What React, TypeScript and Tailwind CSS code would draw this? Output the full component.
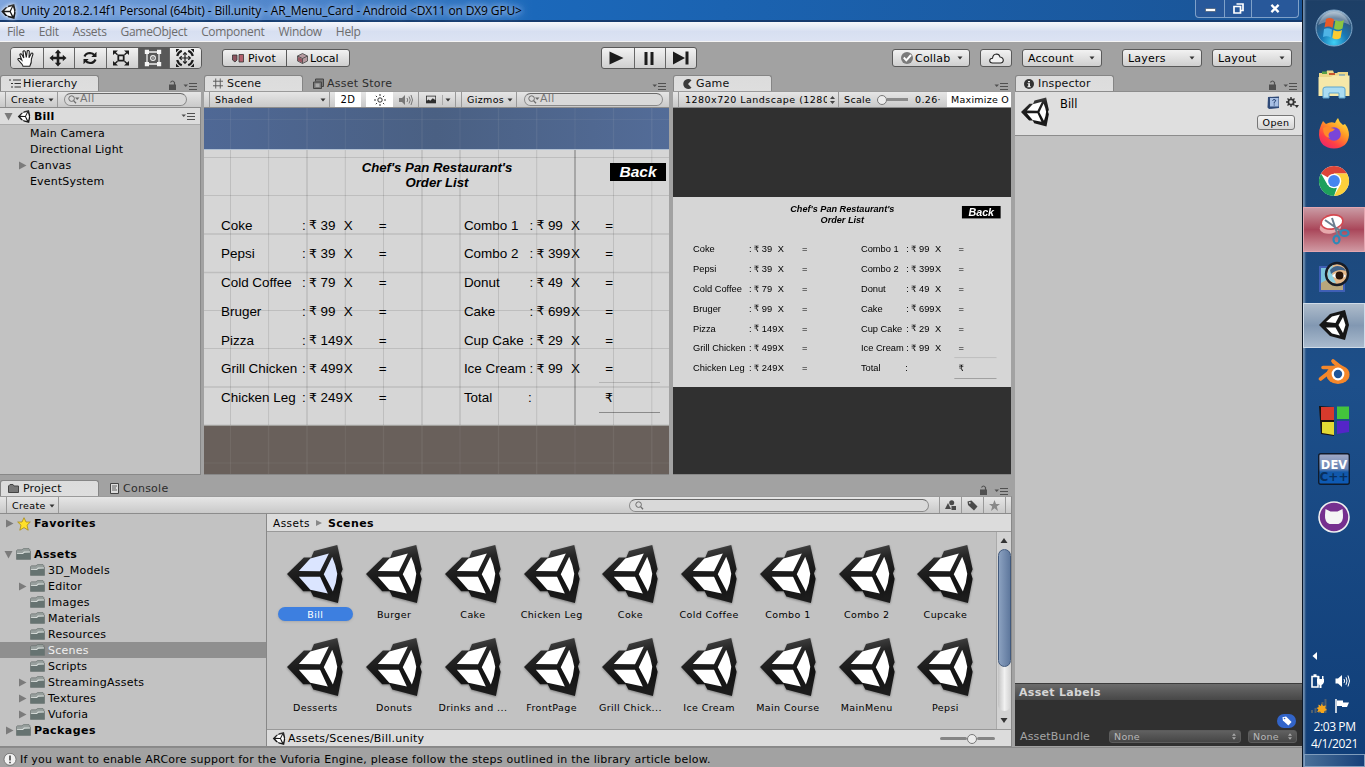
import React from "react";

const UI = "font-['DejaVu_Sans','Noto_Sans',sans-serif]";

function UnityIcon({ className = "", face = "#ffffff" }: { className?: string; face?: string }) {
  return (
    <svg viewBox="80 225 166 172" className={className}>
      <defs>
        <linearGradient id="unityBody" x1="0.2" y1="0" x2="0.4" y2="1">
          <stop offset="0" stopColor="#505050" />
          <stop offset="0.3" stopColor="#262626" />
          <stop offset="0.7" stopColor="#121212" />
          <stop offset="1" stopColor="#1c1c1c" />
        </linearGradient>
      </defs>
      <path fill="url(#unityBody)" d="M80 311L130 262L152 262L160 243L229 225L245 297L240 309L245 325L231 397L158 378L150 362L128 362Z" />
      <path fill={face} d="M115 302L149 265L204 250L178 303ZM115 319L178 319L201 369L149 358ZM214 260Q225 285 229 310Q227 337 216 363L189 312Z" />
    </svg>
  );
}

function Tri({ dir, className = "" }: { dir: "right" | "down"; className?: string }) {
  return (
    <svg viewBox="0 0 9 9" className={`h-[9px] w-[9px] shrink-0 fill-[#7b7b7b] ${className}`}>
      {dir === "right" ? <path d="M1 0.5L8.5 4.5L1 8.5Z" /> : <path d="M0.5 1H8.5L4.5 8.5Z" />}
    </svg>
  );
}

function Caret({ className = "" }: { className?: string }) {
  return (
    <svg viewBox="0 0 6 4" className={`h-[4px] w-[6px] shrink-0 fill-[#333] ${className}`}>
      <path d="M0.5 0.5H5.5L3 3.5Z" />
    </svg>
  );
}

function PaneMenu({ lock = false }: { lock?: boolean }) {
  return (
    <div className="flex items-end gap-[6px] pb-[1px]">
      {lock && (
        <svg viewBox="0 0 9 10" className="h-[10px] w-[9px]">
          <path d="M1 4.5H8V10H1Z" fill="#4f4f4f" />
          <path d="M2.5 2.5Q4.5 -0.5 6.5 2.5V5" fill="none" stroke="#4f4f4f" strokeWidth="1.2" />
        </svg>
      )}
      <svg viewBox="0 0 14 7" className="h-[7px] w-[14px]">
        <path d="M0.5 1.5H5L2.7 4Z" fill="#505050" />
        <path d="M6 0.5H14M6 3.5H14M6 6.5H14" stroke="#505050" strokeWidth="1" />
      </svg>
    </div>
  );
}

function Tab({ icon, label, className = "" }: { icon: React.ReactNode; label: string; className?: string }) {
  return (
    <div className={`flex h-full items-center rounded-t-[3px] border border-b-0 border-[#858585] bg-linear-to-b from-[#dcdcdc] to-[#dedede] text-[11px] tracking-[0.15px] text-[#101010] ${className}`}>
      {icon}
      <span className="leading-none">{label}</span>
    </div>
  );
}

function Folder({ className = "" }: { className?: string }) {
  return (
    <svg viewBox="0 0 15 12" className={`h-[12px] w-[15px] shrink-0 ${className}`}>
      <path d="M0.5 11.4V2.6L1.5 1.8H6L7.5 0.6H13L13.8 1.5V3.2H14.5V11.4Z" fill="#98a09e" stroke="#5f6867" strokeWidth="0.6" />
      <path d="M1 5.2L6.5 4.9L8 3.4H14V4.4L8.5 4.9L7 6.1H1Z" fill="#d8dddb" />
      <path d="M0.6 6H7L8.5 4.8H14.4V11.3H0.6Z" fill="#667371" />
    </svg>
  );
}

function SearchBox({ className = "", text = "", arrow = true }: { className?: string; text?: string; arrow?: boolean }) {
  return (
    <div className={`flex h-[13px] items-center rounded-full border border-[#8a8a8a] border-t-[#6a6a6a] bg-[#d9d9d9] pl-[3px] text-[11px] leading-none text-[#757575] ${className}`}>
      <svg viewBox="0 0 12 9" className="h-[9px] w-[12px]">
        <circle cx="3.6" cy="3.6" r="2.8" fill="none" stroke="#6d6d6d" strokeWidth="1" />
        <path d="M5.6 5.6L8 8.3" stroke="#6d6d6d" strokeWidth="1.3" />
        {arrow && <path d="M7 2.5H11.5L9.2 5Z" fill="#6d6d6d" />}
      </svg>
      <span className="-mt-[2px]">{text}</span>
    </div>
  );
}

const BAR = "flex h-[17px] items-center border-y border-t-[#9a9a9a] border-b-[#8c8c8c] bg-linear-to-b from-[#e6e6e6] to-[#c9c9c9] text-[9.5px] leading-none tracking-[0.35px] text-black";

/* ---------- Order list page ---------- */

type Item = [string, string];
const LEFT: Item[] = [["Coke", "39"], ["Pepsi", "39"], ["Cold Coffee", "79"], ["Bruger", "99"], ["Pizza", "149"], ["Grill Chicken", "499"], ["Chicken Leg", "249"]];
const RIGHT: Item[] = [["Combo 1", "99"], ["Combo 2", "399"], ["Donut", "49"], ["Cake", "699"], ["Cup Cake", "29"], ["Ice Cream", "99"]];
const ROW = "grid h-[28.75px] grid-cols-[81px_7px_11.5px_23.2px_35px_20px] items-center whitespace-nowrap";

function PriceRow({ item }: { item: Item }) {
  return (
    <div className={ROW}>
      <span>{item[0]}</span>
      <span>:</span>
      <span className="text-[12.4px]">₹</span>
      <span>{item[1]}</span>
      <span>X</span>
      <span>=</span>
    </div>
  );
}

function OrderList() {
  return (
    <div className="flex h-[275px] w-[489px] flex-col bg-[#d6d6d6] font-['Liberation_Sans','DejaVu_Sans',sans-serif] text-[13.45px] leading-none text-black">
      <div className="flex h-[61px] pt-[10px] pl-[142px]">
        <div className="w-[206px] text-center text-[13.2px] leading-[15.4px] font-bold italic">
          Chef's Pan Restaurant's
          <br />
          Order List
        </div>
        <div className="ml-[70px] mt-[3px] flex h-[18px] w-[56px] items-center justify-center bg-black text-[15.5px] font-bold text-white italic">Back</div>
      </div>
      <div className="flex gap-[65.2px] pl-[29px]">
        <div>
          {LEFT.map((i) => (
            <PriceRow key={i[0]} item={i} />
          ))}
        </div>
        <div>
          {RIGHT.map((i) => (
            <div key={i[0]} className="[&>div]:grid-cols-[65.5px_7px_11.5px_23px_34.3px_20px]">
              <PriceRow item={i} />
            </div>
          ))}
          <div className="flex h-[28.75px] items-center">
            <span className="w-[64px]">Total</span>
            <span className="w-[71px]">:</span>
            <span className="flex h-[31px] w-[61px] items-center border-y border-t-[#b4b4b4] border-b-[#8a8a8a] pl-[6px] text-[12.4px]">₹</span>
          </div>
        </div>
      </div>
    </div>
  );
}

const VLINES = [26.5, 64.6, 103, 141.3, 179.5, 218, 256, 294.5, 332.7, 371, 409.5, 447.8];
const HLINES = [11.5, 49.5, 87.5, 126, 164.5, 202.5, 240.5, 279, 317, 355];

function ScenePane() {
  return (
    <div className="flex w-[465px] flex-col">
      <div className="flex h-[16px] pl-0">
        <Tab className="w-[99px] pl-[8px]" label="Scene" icon={<svg viewBox="0 0 11 11" className="mr-[4px] h-[11px] w-[10px]"><path d="M3 0V11M8 0V11M0 3H11M0 8H11" stroke="#555" /></svg>} />
        <div className="flex flex-1 items-center pt-[1px] pl-[10px] text-[11px] leading-none tracking-[0.25px] text-[#2c2c2c]">
          <svg viewBox="0 0 11 11" className="mr-[3px] h-[11px] w-[11px]">
            <path d="M0.5 4H8.5V10.5H0.5ZM2.5 3.5V1H10.5V8.5H9" fill="#777" stroke="#444" />
            <path d="M2.5 5.5H6.5V9H2.5Z" fill="#aaa" />
          </svg>
          Asset Store
        </div>
        <div className="flex items-end pr-[3px]"><PaneMenu /></div>
      </div>
      <div className={BAR}>
        <div className="ml-[5px] flex h-full w-[121px] items-center justify-between border-x border-[#999] pr-[3px] pl-[5px]">Shaded<Caret /></div>
        <div className="ml-[5px] flex h-full w-[26px] items-center justify-center bg-white text-[10px]">2D</div>
        <div className="ml-[5px] flex h-full w-[27px] items-center justify-center bg-white">
          <svg viewBox="0 0 12 12" className="h-[12px] w-[12px]">
            <circle cx="6" cy="6" r="2.2" fill="none" stroke="#333" />
            <path d="M6 0V2M6 10V12M0 6H2M10 6H12M1.8 1.8L3 3M9 9L10.2 10.2M10.2 1.8L9 3M3 9L1.8 10.2" stroke="#333" />
          </svg>
        </div>
        <div className="flex h-full w-[26px] items-center justify-center border-r border-[#999]">
          <svg viewBox="0 0 14 12" className="h-[12px] w-[14px]">
            <path d="M0 4H3L6 1V11L3 8H0Z" fill="#777" />
            <path d="M8 4Q9.5 6 8 8M10 2.5Q12.5 6 10 9.5M12 1Q15 6 12 11" fill="none" stroke="#777" />
          </svg>
        </div>
        <div className="flex h-full w-[37px] items-center border-r border-[#999] pr-[4px] pl-[7px]">
          <svg viewBox="0 0 12 9" className="h-[9px] w-[12px]">
            <path d="M0 0H12V9H0Z" fill="#2e2e2e" />
            <path d="M1 1H11V5L8 3L5 6L3 4.5L1 6Z" fill="#dcdcdc" />
          </svg>
          <div className="ml-[6px] h-[10px] w-[1px] bg-[#aaa]" />
          <Caret className="ml-[2px]" />
        </div>
        <div className="ml-[5px] flex h-full w-[56px] items-center justify-between border-x border-[#999] pr-[3px] pl-[5px]">Gizmos<Caret /></div>
        <SearchBox className="ml-[7px] w-[139px]" text="All" />
      </div>
      <div className="relative h-[367px] overflow-hidden border-b border-[#888] bg-[#69605b]">
        <div className="h-[41px] bg-linear-to-r from-[#4f6895] via-[#4a6083] to-[#536c98]" />
        <div className="h-[1px] bg-[#b0bfd2]" />
        <div className="-ml-[12px] h-[275px] w-[489px]"><OrderList /></div>
        <div className="h-[1px] bg-[#aaa9a4]" />
        <svg className="absolute inset-0 h-[367px] w-[465px]">
          {VLINES.map((x, i) => (
            <path key={`o${x}`} d={`M${x} 0V42M${x} 318V367`} stroke="#d0d0d0" strokeOpacity="0.09" strokeWidth={i % 3 === 0 ? 1 : 1.4} />
          ))}
          {VLINES.map((x) => (
            <path key={x} d={`M${x} 42V317`} stroke="#000" strokeOpacity={x === 371 ? 0.28 : 0.11} strokeWidth={x === 371 || x === 218 || x === 256 || x === 103 ? 1.6 : 1} />
          ))}
          {HLINES.map((y) => (
            <path key={y} d={`M0 ${y}H465`} stroke={y < 43 || y > 317 ? "#ccc" : "#000"} strokeOpacity={y < 43 || y > 317 ? 0.08 : 0.11} strokeWidth={y === 126 || y === 164.5 || y === 279 ? 1.6 : 1} />
          ))}
        </svg>
      </div>
    </div>
  );
}

function GamePane() {
  return (
    <div className="flex w-[338px] flex-col">
      <div className="flex h-[16px] justify-between">
        <Tab className="w-[99px] pl-[9px]" label="Game" icon={<svg viewBox="0 0 10 10" className="mr-[3px] h-[10px] w-[10px]"><path d="M5 5L8.5 1.2A5 5 0 1 0 8.5 8.8Z" fill="#3a3a3a" /></svg>} />
        <div className="flex items-end pr-[3px]"><PaneMenu /></div>
      </div>
      <div className={`${BAR} overflow-hidden whitespace-nowrap`}>
        <div className="ml-[5px] flex h-full w-[161px] items-center justify-between border-x border-[#999] pr-[3px] pl-[6px]">
          <span className="w-[142px] overflow-hidden py-[1px] tracking-[0.48px]">1280x720 Landscape (1280</span>
          <svg viewBox="0 0 5 8" className="h-[8px] w-[5px] fill-[#444]"><path d="M0 3L2.5 0L5 3ZM0 5H5L2.5 8Z" /></svg>
        </div>
        <span className="ml-[5px] w-[33px]">Scale</span>
        <div className="flex w-[31px] items-center">
          <div className="h-[10px] w-[10px] shrink-0 rounded-full border border-[#777] bg-[#ececec]" />
          <div className="h-[3px] flex-1 bg-[#8b8b8b]" />
        </div>
        <span className="ml-[7px] w-[27px] text-[9.5px]">0.26·</span>
        <div className="ml-[5px] flex h-full flex-1 items-center bg-white pl-[4px] tracking-[0.25px]">Maximize O</div>
      </div>
      <div className="h-[367px] overflow-hidden border-b border-[#888] bg-[#303030] pt-[89px]">
        <div className="h-[190px] overflow-hidden"><div className="origin-top-left scale-[0.6912]"><OrderList /></div></div>
      </div>
    </div>
  );
}

function HierarchyPane() {
  return (
    <div className="flex w-[201px] flex-col">
      <div className="flex h-[16px] justify-between">
        <Tab className="w-[99px] pl-[8px]" label="Hierarchy" icon={<svg viewBox="0 0 12 9" className="mr-[2px] h-[9px] w-[12px]"><path d="M0 1H2M4 1H12M2 4.5H4M5.5 4.5H12M2 8H4M5.5 8H12" stroke="#333" /></svg>} />
        <div className="flex items-end pr-[4px]"><PaneMenu lock /></div>
      </div>
      <div className={BAR}>
        <div className="ml-[5px] flex h-full w-[53px] items-center justify-between border-x border-[#999] pr-[3px] pl-[5px]">Create<Caret /></div>
        <SearchBox className="ml-[6px] w-[123px]" text="All" />
      </div>
      <div className="h-[367px] border-r border-b border-[#888] bg-[#c2c2c2] text-[11px] tracking-[0.17px]">
        <div className="flex h-[17px] items-center border-b border-[#ababab] bg-[#dcdcdc] pt-[1px] pl-[4px] leading-none">
          <Tri dir="down" />
          <UnityIcon className="ml-[4px] h-[13px] w-[14px]" />
          <b className="ml-[3px] flex-1">Bill</b>
          <div className="pr-[5px]"><PaneMenu /></div>
        </div>
        {["Main Camera", "Directional Light", "Canvas", "EventSystem"].map((t) => (
          <div key={t} className="flex h-[16px] items-center pl-[18px]">
            <span className="w-[12px]">{t === "Canvas" && <Tri dir="right" />}</span>
            <span className="leading-none">{t}</span>
          </div>
        ))}
      </div>
    </div>
  );
}

const TREE: { n: string; a?: boolean }[] = [
  { n: "3D_Models" }, { n: "Editor", a: true }, { n: "Images" }, { n: "Materials" }, { n: "Resources" },
  { n: "Scenes" }, { n: "Scripts" }, { n: "StreamingAssets", a: true }, { n: "Textures", a: true }, { n: "Vuforia", a: true },
];
const FILES = ["Bill", "Burger", "Cake", "Chicken Leg", "Coke", "Cold Coffee", "Combo 1", "Combo 2", "Cupcake", "Desserts", "Donuts", "Drinks and ...", "FrontPage", "Grill Chick...", "Ice Cream", "Main Course", "MainMenu", "Pepsi"];

function ProjectPane() {
  return (
    <div className="mt-[5px] flex w-[1012px] flex-col">
      <div className="flex h-[16px] justify-between">
        <div className="flex">
          <Tab className="w-[99px] pl-[7px]" label="Project" icon={<svg viewBox="0 0 11 9" className="mr-[4px] h-[9px] w-[11px]"><path d="M0.5 8.5V2L2 0.5H5L6 2H10.5V8.5Z" fill="#777" stroke="#444" /></svg>} />
          <div className="flex items-center pl-[11px] text-[11px] leading-none tracking-[0.25px] text-[#2c2c2c]">
            <svg viewBox="0 0 9 11" className="mr-[4px] h-[11px] w-[9px]"><path d="M0.5 0.5H8.5V10.5H0.5Z" fill="#ddd" stroke="#444" /><path d="M2 3H7M2 5H6M2 7H7" stroke="#444" strokeWidth="0.8" /></svg>
            Console
          </div>
        </div>
        <div className="flex items-end pr-[4px]"><PaneMenu lock /></div>
      </div>
      <div className={`${BAR} h-[18px] border-r border-r-[#888]`}>
        <div className="ml-[6px] flex h-full w-[53px] items-center justify-between border-x border-[#999] pt-[1px] pr-[3px] pl-[5px]">Create<Caret /></div>
        <SearchBox className="ml-[570px] w-[300px] pl-[5px]" arrow={false} />
        <div className="ml-[10px] flex h-full">
          <div className="flex w-[22px] items-center justify-center border-l border-[#999]">
            <svg viewBox="0 0 11 10" className="h-[10px] w-[11px] fill-[#4a4a4a]"><path d="M0 9L3 3L6 9Z" /><circle cx="6.7" cy="2.7" r="2.5" /><path d="M6.5 6H11V10H6.5Z" /></svg>
          </div>
          <div className="flex w-[22px] items-center justify-center border-l border-[#999]">
            <svg viewBox="0 0 11 11" className="h-[11px] w-[11px]"><path d="M0.5 1.5L4.5 0.5L10.5 6.5L7 10.5L1 5Z" fill="#4a4a4a" /><circle cx="2.8" cy="2.8" r="0.9" fill="#ddd" /></svg>
          </div>
          <div className="flex w-[23px] items-center justify-center border-x border-[#999]">
            <svg viewBox="0 0 11 11" className="h-[11px] w-[11px] fill-[#888]"><path d="M5.5 0L7 4H11L7.8 6.5L9 11L5.5 8.3L2 11L3.2 6.5L0 4H4Z" /></svg>
          </div>
        </div>
      </div>
      <div className="flex h-[233px] border-b border-[#888]">
        <div className="w-[267px] border-r border-[#888] bg-[#c2c2c2] pt-[1px] text-[11px] leading-none tracking-[0.17px]">
          <div className="flex h-[17px] items-center pl-[5px]">
            <Tri dir="right" />
            <svg viewBox="0 0 14 14" className="ml-[3px] h-[14px] w-[14px]"><path d="M7 0.7L9 5H13.3L10 8.2L11.2 13.2L7 10.6L2.8 13.2L4 8.2L0.7 5H5Z" fill="#ffe028" stroke="#a88a18" strokeWidth="0.8" /></svg>
            <b className="ml-[3px] tracking-[0.5px]">Favorites</b>
          </div>
          <div className="mt-[14px] flex h-[16px] items-center pl-[4px]">
            <Tri dir="down" /><Folder className="ml-[3px]" />
            <b className="ml-[3px] tracking-[0.4px]">Assets</b>
          </div>
          {TREE.map((t) => (
            <div key={t.n} className={`flex h-[16px] items-center pl-[18px] ${t.n === "Scenes" ? "bg-[#8f8f8f] text-[#f0f0f0]" : "text-black"}`}>
              <span className="w-[12px]">{t.a && <Tri dir="right" />}</span>
              <Folder />
              <span className="ml-[3px] tracking-[0.24px]">{t.n}</span>
            </div>
          ))}
          <div className="flex h-[16px] items-center pl-[5px]">
            <Tri dir="right" /><Folder className="ml-[2px]" />
            <b className="ml-[3px] tracking-[0.45px]">Packages</b>
          </div>
        </div>
        <div className="flex w-[745px] flex-col border-r border-[#888]">
          <div className="flex h-[18px] items-center border-b border-[#999] bg-[#dcdcdc] pt-[1px] pl-[6px] text-[10.5px] leading-none tracking-[0.45px]">
            Assets
            <svg viewBox="0 0 6 6" className="mx-[6px] h-[6px] w-[6px] fill-[#888]"><path d="M0 0L6 3L0 6Z" /></svg>
            <b className="text-[11px] tracking-[0.4px]">Scenes</b>
          </div>
          <div className="flex h-[197px] bg-[#c2c2c2]">
            <div className="grid w-[729px] grid-cols-[repeat(9,78.75px)] grid-rows-[93px_93px] pt-[13px] pl-[9px]">
              {FILES.map((f, i) => (
                <div key={f} className="flex flex-col items-center">
                  <UnityIcon className="h-[58px] w-[56px] drop-shadow-[0_1px_1px_rgba(0,0,0,0.35)]" face={i === 0 ? "#dbe5ff" : "#ffffff"} />
                  <div className={`mt-[4px] flex h-[14px] w-[75px] items-center justify-center rounded-full pt-[1px] text-[9.5px] leading-none tracking-[0.4px] whitespace-nowrap ${i === 0 ? "bg-[#3d7fe0] text-white shadow-sm" : "text-black"}`}>{f}</div>
                </div>
              ))}
            </div>
            <div className="flex w-[15px] flex-col items-center border-l border-[#aaa] bg-[#d2d2d2]">
              <div className="flex h-[17px] items-center"><svg viewBox="0 0 8 5" className="h-[5px] w-[8px] fill-[#333]"><path d="M0.5 5L4 0L7.5 5Z" /></svg></div>
              <div className="h-[162px] w-[13px] rounded-full bg-linear-to-r from-[#c2c2c2] via-[#f1f1f1] to-[#d0d0d0]">
                <div className="h-[118px] rounded-full border border-[#41597c] bg-linear-to-r from-[#8ba1c0] to-[#5f789d]" />
              </div>
              <div className="flex h-[18px] items-center"><svg viewBox="0 0 8 5" className="h-[5px] w-[8px] fill-[#333]"><path d="M0.5 0L4 5L7.5 0Z" /></svg></div>
            </div>
          </div>
          <div className="flex h-[17px] items-center border-t border-[#999] bg-[#dcdcdc] pt-[1px] pl-[5px] text-[11px] leading-none tracking-[0.24px]">
            <UnityIcon className="mr-[2px] h-[13px] w-[14px]" />
            <span className="flex-1">Assets/Scenes/Bill.unity</span>
            <div className="mr-[16px] flex w-[55px] items-center">
              <div className="h-[3px] w-[27px] rounded bg-[#858585]" />
              <div className="h-[10px] w-[10px] shrink-0 rounded-full border border-[#777] bg-[#ececec]" />
              <div className="h-[3px] flex-1 rounded bg-[#858585]" />
            </div>
          </div>
        </div>
      </div>
    </div>
  );
}

function InspectorPane() {
  return (
    <div className="flex w-[287px] flex-col">
      <div className="flex h-[16px] justify-between">
        <Tab
          className="w-[99px] pl-[8px]"
          label="Inspector"
          icon={<svg viewBox="0 0 10 10" className="mr-[4px] h-[10px] w-[10px]"><circle cx="5" cy="5" r="5" fill="#333" /><path d="M4 2H6V3.3H4ZM3.5 4.3H6V7.3H6.8V8.2H3.4V7.3H4.2V5.1H3.5Z" fill="#eee" /></svg>}
        />
        <div className="flex items-end pr-[5px]"><PaneMenu lock /></div>
      </div>
      <div className="flex h-[45px] justify-between border-y border-y-[#8c8c8c] bg-[#dfdfdf] pl-[6px]">
        <div className="flex pt-[5px]">
          <UnityIcon className="h-[30px] w-[28px]" />
          <span className="mt-[2px] ml-[11px] text-[11.5px] leading-none">Bill</span>
        </div>
        <div className="flex flex-col items-end pt-[4px] pr-[3px]">
          <div className="flex items-center gap-[6px]">
            <svg viewBox="0 0 13 13" className="h-[13px] w-[13px]"><path d="M1 1L12 0.5V12L2 13L0.5 11.5Z" fill="#2f4a78" /><path d="M3 2H11.5V10.5H3Z" fill="#a8c0e4" /><path d="M5.5 4.5Q7 2.5 8.7 4.3Q8.7 5.5 7.2 6.3V7.5M7.2 8.5V9.5" stroke="#1c3664" fill="none" /></svg>
            <svg viewBox="0 0 13 12" className="h-[12px] w-[13px]"><circle cx="5" cy="5" r="2.7" fill="none" stroke="#333" strokeWidth="1.8" /><path d="M5 0V10M0 5H10M1.5 1.5L3 3M7 7L8.5 8.5M8.5 1.5L7 3M3 7L1.5 8.5" stroke="#333" strokeWidth="1.4" /><circle cx="5" cy="5" r="1.7" fill="#dfdfdf" /><path d="M8.5 8H13L10.8 11Z" fill="#333" /></svg>
          </div>
          <div className="mt-[6px] mr-[4px] flex h-[15px] w-[38px] items-center justify-center rounded-[3px] border border-[#777] bg-linear-to-b from-[#f4f4f4] to-[#d5d5d5] text-[9.5px] leading-none tracking-[0.4px]">Open</div>
        </div>
      </div>
      <div className="h-[547px] bg-[#c2c2c2]" />
      <div className="flex h-[17px] items-center border-t border-[#3c3c3c] bg-linear-to-b from-[#6b6b6b] to-[#474747] pt-[1px] pl-[4px] text-[11px] leading-none font-bold tracking-[0.3px] text-[#d6d6d6]">Asset Labels</div>
      <div className="flex h-[46px] flex-col bg-[#303030]">
        <div className="flex h-[29px] items-end justify-end pr-[6px] pb-[1px]">
          <div className="flex h-[14px] w-[19px] items-center justify-center rounded-full bg-[#3264c8]">
            <svg viewBox="0 0 11 11" className="h-[10px] w-[10px]"><path d="M0.5 1.5L4.5 0.5L10.5 6.5L7 10.5L1 5Z" fill="#fff" /><circle cx="2.8" cy="2.8" r="0.9" fill="#3264c8" /></svg>
          </div>
        </div>
        <div className="flex h-[15px] items-center pl-[5px] text-[11px] leading-none tracking-[0.15px] text-[#a5a5a5]">
          <span className="w-[89px]">AssetBundle</span>
          <Select className="w-[132px]" />
          <Select className="ml-[7px] w-[49px]" />
        </div>
      </div>
    </div>
  );
}

function Select({ className }: { className: string }) {
  return (
    <div className={`flex h-[13px] items-center justify-between rounded-[3px] border border-[#5c5c5c] bg-linear-to-b from-[#606060] to-[#464646] pr-[4px] pl-[4px] text-[9.5px] tracking-[0.3px] text-[#b8b8b8] ${className}`}>
      None
      <svg viewBox="0 0 5 8" className="h-[7px] w-[4px] fill-[#aaa]"><path d="M0 3L2.5 0L5 3ZM0 5H5L2.5 8Z" /></svg>
    </div>
  );
}

const BTN = "flex items-center rounded-[3px] border border-[#595959] bg-linear-to-b from-[#f2f2f2] to-[#cfcfcf] text-[11px] leading-none tracking-[0.2px] text-black";

function Dropdown({ label, className }: { label: string; className: string }) {
  return (
    <div className={`${BTN} h-[18px] justify-between pr-[6px] pl-[5px] ${className}`}>
      {label}
      <Caret />
    </div>
  );
}

const TOOLS = [
  <path key="hand" d="M6 17.2Q5.5 15.5 3.2 13.2L0.9 10.6Q0.9 9 2.8 9.6L4.8 11.2L2.8 5.8Q3.2 4.2 4.7 5.3L6.8 9L6 2.6Q7 0.9 8.2 2.5L9.3 8.3L10.3 1.8Q11.7 0.8 12.3 2.5L12 8.8L14.3 4.2Q15.9 3.6 15.9 5.3L14.4 10Q14.8 13.5 12.8 17.2Z" fill="#fff" stroke="#222" strokeWidth="1.1" />,
  <path key="move" d="M9 0.5L12.2 4.2H10.3V7.7H13.8V5.8L17.5 9L13.8 12.2V10.3H10.3V13.8H12.2L9 17.5L5.8 13.8H7.7V10.3H4.2V12.2L0.5 9L4.2 5.8V7.7H7.7V4.2H5.8Z" fill="#1c1c1c" />,
  <g key="rot" fill="none" stroke="#1c1c1c" strokeWidth="2.2"><path d="M3.5 7.5Q5 4 9 4Q12 4.2 13.5 6.3M14.5 10.5Q13 14 9 14Q6 13.8 4.5 11.7" /><path d="M15.5 2.8V8H10.3ZM2.5 15.2V10H7.7Z" fill="#1c1c1c" stroke="none" /></g>,
  <g key="scale"><path d="M6.3 6.3H11.7V11.7H6.3Z" fill="none" stroke="#1c1c1c" strokeWidth="1.8" /><path d="M1 1.5H6L1 6ZM17 1.5V6L12 1.5ZM1 16.5V12L6 16.5ZM17 16.5H12L17 12Z" fill="#1c1c1c" /><path d="M2.5 3L5.5 5.7M15.5 3L12.5 5.7M2.5 15L5.5 12.3M15.5 15L12.5 12.3" stroke="#1c1c1c" strokeWidth="1.5" /></g>,
  <g key="rect"><path d="M3 3H15V15H3Z" fill="none" stroke="#eee" strokeWidth="1.3" /><path d="M0.8 0.8H5V5H0.8ZM13 0.8H17.2V5H13ZM0.8 13H5V17.2H0.8ZM13 13H17.2V17.2H13Z" fill="#f5f5f5" /><circle cx="9" cy="9" r="2.4" fill="none" stroke="#eee" strokeWidth="1.1" /><circle cx="9" cy="9" r="0.8" fill="#eee" /></g>,
  <g key="multi" fill="none" stroke="#1c1c1c"><path d="M9 4V14M4 9H14" strokeWidth="1.2" /><path d="M7.2 5.7L9 3.7L10.8 5.7M7.2 12.3L9 14.3L10.8 12.3M5.7 7.2L3.7 9L5.7 10.8M12.3 7.2L14.3 9L12.3 10.8" strokeWidth="1.2" /><path d="M1.2 7Q2.2 3.2 5.8 1.7M12.2 1.7Q15.8 3.2 16.8 7M16.8 11Q15.8 14.8 12.2 16.3M5.8 16.3Q2.2 14.8 1.2 11" strokeWidth="2.2" /><path d="M0 0H3.5L0 3.5ZM18 0V3.5L14.5 0ZM0 18V14.5L3.5 18ZM18 18H14.5L18 14.5Z" fill="#1c1c1c" stroke="none" /></g>,
];

function Toolbar() {
  return (
    <div className="flex h-[33px] pt-[5px] pl-[10px]">
      <div className="flex h-[22px] w-[192px] overflow-hidden rounded-[4px] border border-[#595959]">
        {TOOLS.map((t, i) => (
          <div key={i} className={`flex w-[32px] items-center justify-center pr-[2px] ${i ? "border-l border-[#666]" : ""} ${i === 4 ? "bg-[#585858]" : "bg-linear-to-b from-[#f2f2f2] to-[#cfcfcf]"}`}>
            <svg viewBox="0 0 18 18" className="h-[18px] w-[18px]">{t}</svg>
          </div>
        ))}
      </div>
      <div className={`${BTN} mt-[2px] ml-[20px] h-[18px] w-[128px]`}>
        <div className="flex h-full w-[64px] items-center border-r border-[#595959] pl-[9px]">
          <svg viewBox="0 0 12 9" className="mr-[4px] h-[9px] w-[12px]"><path d="M0.5 1H5V6L3 8L0.5 6Z" fill="#8d5560" stroke="#333" strokeWidth="0.8" /><path d="M7 0.5H11.5V8H7Z" fill="#b3606c" stroke="#333" strokeWidth="0.8" /></svg>
          Pivot
        </div>
        <svg viewBox="0 0 11 11" className="mr-[2px] ml-[10px] h-[11px] w-[11px]"><path d="M5.5 0.5L10.5 3V8L5.5 10.5L0.5 8V3Z" fill="#b59aa0" stroke="#444" strokeWidth="0.8" /><path d="M0.5 3L5.5 5.5L10.5 3M5.5 5.5V10.5" fill="none" stroke="#444" strokeWidth="0.8" /><path d="M1 4L5 6V9.6L1 7.7Z" fill="#995762" /></svg>
        <span className="tracking-[0]">Local</span>
      </div>
      <div className={`${BTN} ml-[251px] h-[22px] w-[96px]`}>
        <div className="flex h-full w-[32px] items-center justify-center pr-[4px]"><svg viewBox="0 0 14 14" className="h-[14px] w-[15px]"><path d="M0 0.5L14 7L0 13.5Z" fill="#1c1c1c" /></svg></div>
        <div className="flex h-full w-[32px] items-center justify-center border-x border-[#666] pr-[2px]"><svg viewBox="0 0 10 13" className="h-[13px] w-[10px]"><path d="M0.5 0H3.5V13H0.5ZM6.5 0H9.5V13H6.5Z" fill="#1c1c1c" /></svg></div>
        <div className="flex h-full w-[30px] items-center justify-center pr-[1px]"><svg viewBox="0 0 16 14" className="h-[14px] w-[16px]"><path d="M0 0.5L12 7L0 13.5ZM12.5 0.5H15.5V13.5H12.5Z" fill="#1c1c1c" /></svg></div>
      </div>
      <div className="mt-[2px] ml-[195px] flex">
        <div className={`${BTN} h-[18px] w-[78px] pl-[8px]`}>
          <svg viewBox="0 0 12 12" className="mr-[2px] h-[12px] w-[12px]"><circle cx="6" cy="6" r="6" fill="#7b7b7b" /><path d="M2.8 5.5L5.3 8.3L10 3" fill="none" stroke="#fff" strokeWidth="2" /></svg>
          <span className="flex-1">Collab</span>
          <Caret className="mr-[6px]" />
        </div>
        <div className={`${BTN} ml-[10px] h-[18px] w-[32px] justify-center`}>
          <svg viewBox="0 0 15 11" className="h-[11px] w-[15px]"><path d="M3.5 10Q0.7 9.8 0.7 7.5Q1 5.2 3.5 5.3Q4 1.2 7.5 1Q10.3 1 11 4Q14.3 4.5 14.3 7.5Q14 10 11.5 10Z" fill="#f2f2f2" stroke="#222" strokeWidth="1.1" /></svg>
        </div>
        <Dropdown label="Account" className="ml-[10px] w-[80px]" />
        <Dropdown label="Layers" className="ml-[20px] w-[80px]" />
        <Dropdown label="Layout" className="ml-[10px] w-[80px]" />
      </div>
    </div>
  );
}

/* ---------- Task bar ---------- */

function Slot({ children, look = "" }: { children: React.ReactNode; look?: string }) {
  return (
    <div className="flex h-[48px] items-center">
      <div className={`flex h-[45px] w-full items-center justify-center ${look}`}>
        <svg viewBox="0 0 32 32" className="h-[32px] w-[32px]">{children}</svg>
      </div>
    </div>
  );
}

function TaskBar() {
  return (
    <div className="flex w-[63px] flex-col border-l border-[#0a1626] bg-linear-to-b from-[#1d3f66] via-[#1d4f8a] to-[#103e78] font-['Open_Sans','Noto_Sans',sans-serif] shadow-[inset_3px_0_2px_-1px_#7390b0]">
      <div className="flex h-[61px] justify-center pt-[9px]">
        <svg viewBox="0 0 38 38" className="h-[38px] w-[38px]">
          <defs>
            <radialGradient id="orb" cx="0.5" cy="0.9" r="0.9"><stop offset="0" stopColor="#3fd0f5" /><stop offset="0.4" stopColor="#1877b5" /><stop offset="0.75" stopColor="#31577c" /><stop offset="1" stopColor="#b6cbdc" /></radialGradient>
          </defs>
          <circle cx="19" cy="19" r="18" fill="url(#orb)" stroke="#7fa6c8" strokeWidth="1" />
          <path d="M3 16Q8 3 19 3Q30 3 35 16Q19 8 3 16Z" fill="#fff" opacity="0.3" />
          <path d="M11 10Q15 8 19 10.5L17.5 19Q13.5 16.5 9.5 18.5Z" fill="#e85a28" />
          <path d="M20.5 11Q25 13.5 29 11L27.5 19.5Q23.5 22 19 19.5Z" fill="#8cc541" />
          <path d="M9 20Q13 18.5 17 20.5L15.8 28.5Q12 26.5 8 28Z" fill="#4fb4e6" />
          <path d="M18.5 21Q23 23.5 27 21L25.5 29Q21.5 31.5 17.3 29Z" fill="#fbcb32" />
        </svg>
      </div>
      <Slot>
        <path d="M1 4H8L9 1.5H15L16 4H19L20 3H30V27H1Z" fill="#ecd789" /><path d="M4 2.5H9V5H4Z" fill="#58a046" /><path d="M11 4H17V6H11Z" fill="#c8562e" /><path d="M21 5.5H27V8H21Z" fill="#4d8cc0" /><path d="M0.5 8H13L15 6.5H31.5V27H0.5Z" fill="#f6e8a9" /><path d="M5 29V20Q5 18 8 18H24Q27 18 27 20V29H21V24H11V29Z" fill="#aadcf2" stroke="#5ca5d0" />
      </Slot>
      <Slot>
        <defs><linearGradient id="fox" x1="0.9" y1="0" x2="0.2" y2="1"><stop offset="0" stopColor="#fff04a" /><stop offset="0.4" stopColor="#ff9a24" /><stop offset="0.75" stopColor="#ff3f45" /><stop offset="1" stopColor="#e9246f" /></linearGradient></defs>
        <path d="M3 8L5 4L8 7Q13 4 17 6Q18 3 20 1Q21 5 25 8L27 7Q31 12 31 18Q30 31 16 31.5Q2 31 1 18Q1 12 3 8Z" fill="url(#fox)" /><circle cx="16" cy="17" r="6.8" fill="#7a45d8" /><path d="M5 11Q10 8 13 11L17 12Q15 15 12 15Q9 18 12 21Q5 20 5 11Z" fill="#ff8a28" />
      </Slot>
      <Slot>
        <circle cx="16" cy="16" r="15" fill="#fff" /><path d="M16 16L3 8.5A15 15 0 0 1 29 8.5H16Z" fill="#dc4437" /><path d="M16 8.5H29A15 15 0 0 1 16 31L22.5 19.5Z" fill="#fdd03b" /><path d="M3 8.5L9.5 19.7L19 22.5L16 31A15 15 0 0 1 3 8.5Z" fill="#1ea05b" /><circle cx="16" cy="16" r="7.3" fill="#fff" /><circle cx="16" cy="16" r="5.9" fill="#4586f0" />
      </Slot>
      <Slot look="border border-[#e3a6b0] bg-linear-to-b from-[#c99aa4] via-[#a9465a] to-[#cf98a2]">
        <ellipse cx="12.5" cy="14" rx="11" ry="6.5" fill="#e7a8ac" transform="rotate(-10 12.5 14)" /><ellipse cx="14" cy="9" rx="11" ry="7" fill="#fff" stroke="#d54850" strokeWidth="1.6" transform="rotate(-10 14 9)" /><path d="M7 7L24 19M14 5L20 23" stroke="#6d7f90" strokeWidth="2" /><ellipse cx="26.5" cy="20" rx="4" ry="3" fill="none" stroke="#2e89b8" strokeWidth="2.2" /><ellipse cx="18.5" cy="26.5" rx="3" ry="3.8" fill="none" stroke="#2e89b8" strokeWidth="2.2" />
      </Slot>
      <Slot>
        <path d="M1 5H27V31H1Z" fill="#405fb5" /><path d="M3 7H25V29H3Z" fill="#7bc3dc" /><path d="M3 22L12 17L25 24V29H3Z" fill="#b8a77c" /><circle cx="19" cy="13" r="11" fill="#e5b98a" stroke="#151b26" strokeWidth="2.4" /><path d="M10 17Q8 8 15 4Q12 12 18 22Q13 22 10 17Z" fill="#8ad0e2" /><path d="M12 9Q18 2 26 7L28 10Q20 7 13 13Z" fill="#40638a" /><path d="M14 15Q20 8 28 15Q21 20 14 15Z" fill="#fff" /><circle cx="21.5" cy="14.5" r="4" fill="#291408" />
      </Slot>
      <Slot look="border border-[#cfdbe8] bg-linear-to-b from-[#aebccb] via-[#8298b2] to-[#a9bacd]">
        <path d="M1 16L12 5L27 1L31 16L27 31L12 27Z" fill="#161616" /><path d="M8 13L14 7.5L22 5.5L17.5 14ZM8 18.5H17.5L22 26.5L14 24.5ZM25 8L27.5 16L25 24L20.5 16Z" fill="#fff" />
      </Slot>
      <Slot>
        <path d="M15 2.5L29 13L27 18L22 12L14 6Z" fill="#f5872a" /><path d="M15 4L25 12M5 10.5H19M2.5 22L14 13" stroke="#f5872a" strokeWidth="3.6" strokeLinecap="round" /><ellipse cx="20" cy="17.5" rx="11.5" ry="9.5" fill="#f5872a" /><circle cx="20" cy="17" r="6.4" fill="#fff" /><circle cx="20" cy="17" r="4.2" fill="#20569a" />
      </Slot>
      <Slot>
        <path d="M1 1L16 2V31L3 29Z" fill="#1a1210" /><path d="M3 2H16V15H3Z" fill="#d83a2c" /><path d="M19 1.5H31V14H19Z" fill="#43c43c" /><path d="M4 17H16V30L4 28Z" fill="#e3d934" /><path d="M19 16H31V27L19 29Z" fill="#5425c8" />
      </Slot>
      <Slot>
        <defs><linearGradient id="dev" x1="0" y1="0" x2="0" y2="1"><stop offset="0" stopColor="#a3abc6" /><stop offset="0.5" stopColor="#6683b4" /><stop offset="0.6" stopColor="#1358a8" /><stop offset="1" stopColor="#0d5bb8" /></linearGradient></defs>
        <rect x="0.7" y="0.7" width="30.6" height="30.6" rx="2" fill="url(#dev)" stroke="#101b2c" strokeWidth="1.4" />
        <text x="16" y="15.5" textAnchor="middle" fontSize="11.5" fontWeight="bold" fill="#fff" fontFamily="DejaVu Sans">DEV</text>
        <text x="16" y="28" textAnchor="middle" fontSize="12" fontWeight="bold" fill="#08305f" fontFamily="DejaVu Sans">C++</text>
      </Slot>
      <Slot>
        <circle cx="16" cy="16" r="15" fill="#76308f" stroke="#f2f2f2" strokeWidth="1.6" /><path d="M7.5 8L12.5 10.5H19.5L24.5 8L25 14Q25.5 21 20.5 23H11.5Q6.5 21 7 14Z" fill="#f5f5f5" />
      </Slot>
      <div className="mt-[109px] flex h-[12px] items-center pl-[9px]">
        <svg viewBox="0 0 5 8" className="h-[8px] w-[5px] fill-white"><path d="M5 0V8L0.5 4Z" /></svg>
      </div>
      <div className="mt-[11px] flex h-[16px] items-center gap-[10px] pl-[8px]">
        <svg viewBox="0 0 14 15" className="h-[15px] w-[14px]"><path d="M1 2.5H7V13H1ZM2.5 1H5.5" fill="none" stroke="#fff" strokeWidth="1.6" /><path d="M6 5H13V8Q12 11 10.5 11V14H8.5V11Q6.5 10 6 8ZM7 2H8.5V5H7ZM11 2H12.5V5H11Z" fill="#fff" /></svg>
        <svg viewBox="0 0 15 14" className="h-[14px] w-[15px]"><path d="M0.5 4.5H3L7 1V13L3 9.5H0.5Z" fill="#fff" /><path d="M9 5Q10.2 7 9 9M11 3.2Q13 7 11 10.8M13 1.5Q16 7 13 12.5" fill="none" stroke="#fff" strokeWidth="1" /></svg>
      </div>
      <div className="mt-[9px] flex h-[15px] items-center gap-[8px] pl-[8px]">
        <svg viewBox="0 0 16 14" className="h-[14px] w-[16px]"><path d="M0 11H2V14H0ZM3.5 9H5.5V14H3.5ZM7 6H9V14H7ZM10.5 3H12.5V14H10.5ZM13.5 0H15.5V14H13.5Z" fill="#53616e" /><path d="M10.5 4.5L12 7L15 6.5L14 9L16 11L13.5 12L13 14H10L9 12.5L6 13L7.5 10.5L5.5 9L8 8L7.5 5.5L10 7Z" fill="#f5a61c" /></svg>
        <svg viewBox="0 0 14 14" className="h-[14px] w-[14px]"><path d="M1 0V14" stroke="#fff" strokeWidth="1.5" /><path d="M2 1.5H8V3.5H14L12 8H7V7H2Z" fill="#fff" /></svg>
      </div>
      <div className="mt-[5px] pl-[1px] text-center text-[12px] leading-[17px] tracking-[-0.4px] whitespace-nowrap text-white">
        2:03 PM
        <br />
        4/1/2021
      </div>
      <div className="mt-auto ml-[1px] h-[13px] border border-[#7f9cbc] bg-linear-to-r from-[#4a7099] to-[#164079]" />
    </div>
  );
}

function TitleBar() {
  return (
    <div className="flex h-[22px] justify-between border-b-2 border-b-[#163a6e] bg-linear-to-r from-[#7ea4dc] via-[#1b68ba] via-[41%] to-[#1a5496]">
      <div className="flex h-full items-center pt-[2px] pl-[1px] font-['Open_Sans','Noto_Sans',sans-serif] text-[12px] leading-none tracking-[-0.135px] whitespace-nowrap text-black [text-shadow:0_0_5px_#a9c6f0,0_0_9px_#a9c6f0,0_0_12px_#a9c6f0]">
        <UnityIcon className="mr-[5px] h-[15px] w-[15px] drop-shadow-[0_0_2px_#fff]" />
        Unity 2018.2.14f1 Personal (64bit) - Bill.unity - AR_Menu_Card - Android &lt;DX11 on DX9 GPU&gt;
      </div>
      <div className="mr-[3px] flex h-[18px] w-[104px] rounded-b-[4px] border border-t-0 border-[#7fa1c9] bg-[#28589a]">
        <div className="flex w-[29px] items-center justify-center border-r border-[#7fa1c9]"><svg viewBox="0 0 11 5" className="mt-[4px] h-[5px] w-[11px]"><path d="M0.5 0.5H10.5V3.5H0.5Z" fill="#fff" stroke="#3c4c60" strokeWidth="0.6" /></svg></div>
        <div className="flex w-[27px] items-center justify-center border-r border-[#7fa1c9]"><svg viewBox="0 0 11 11" className="h-[11px] w-[11px]"><path d="M3.5 1H10V7.5H8M1 3.5H7.5V10H1Z" fill="none" stroke="#fff" strokeWidth="1.7" /></svg></div>
        <div className="flex flex-1 items-center justify-center"><svg viewBox="0 0 11 10" className="h-[9px] w-[10px]"><path d="M1.5 1L9.5 9M9.5 1L1.5 9" stroke="#fff" strokeWidth="2.5" /></svg></div>
      </div>
    </div>
  );
}

export default function App() {
  return (
    <div className={`flex h-[767px] w-[1365px] overflow-hidden ${UI}`}>
      <div className="flex w-[1302px] flex-col bg-[#a2a2a2]">
        <TitleBar />
        <div className="flex h-[20px] items-center gap-[14px] border-b border-[#f4f4f4] bg-linear-to-b from-[#f6f7fb] via-[#d7dff1] via-50% to-[#dce3f3] pl-[7px] font-['Open_Sans','Noto_Sans',sans-serif] text-[12px] tracking-[-0.32px] text-[#6d6d6d]">
          {["File", "Edit", "Assets", "GameObject", "Component", "Window", "Help"].map((m) => (
            <span key={m}>{m}</span>
          ))}
        </div>
        <Toolbar />
        <div className="flex h-[672px] gap-[3px]">
          <div className="flex w-[1012px] flex-col">
            <div className="flex h-[400px]">
              <HierarchyPane />
              <div className="ml-[3px] flex gap-[4px]">
                <ScenePane />
                <GamePane />
              </div>
            </div>
            <ProjectPane />
          </div>
          <InspectorPane />
        </div>
        <div className="flex flex-1 items-center border-t border-[#8a8a8a] pt-[3px] pl-[3px] text-[11px] leading-none tracking-[0.235px] whitespace-nowrap text-black">
          <svg viewBox="0 0 14 13" className="mr-[3px] h-[13px] w-[14px]"><circle cx="7" cy="6.3" r="6" fill="#f2f2f2" stroke="#666" strokeWidth="0.8" /><path d="M7 2.5V7.5M7 8.8V10.3" stroke="#444" strokeWidth="1.6" /></svg>
          If you want to enable ARCore support for the Vuforia Engine, please follow the steps outlined in the library article below.
        </div>
      </div>
      <TaskBar />
    </div>
  );
}
